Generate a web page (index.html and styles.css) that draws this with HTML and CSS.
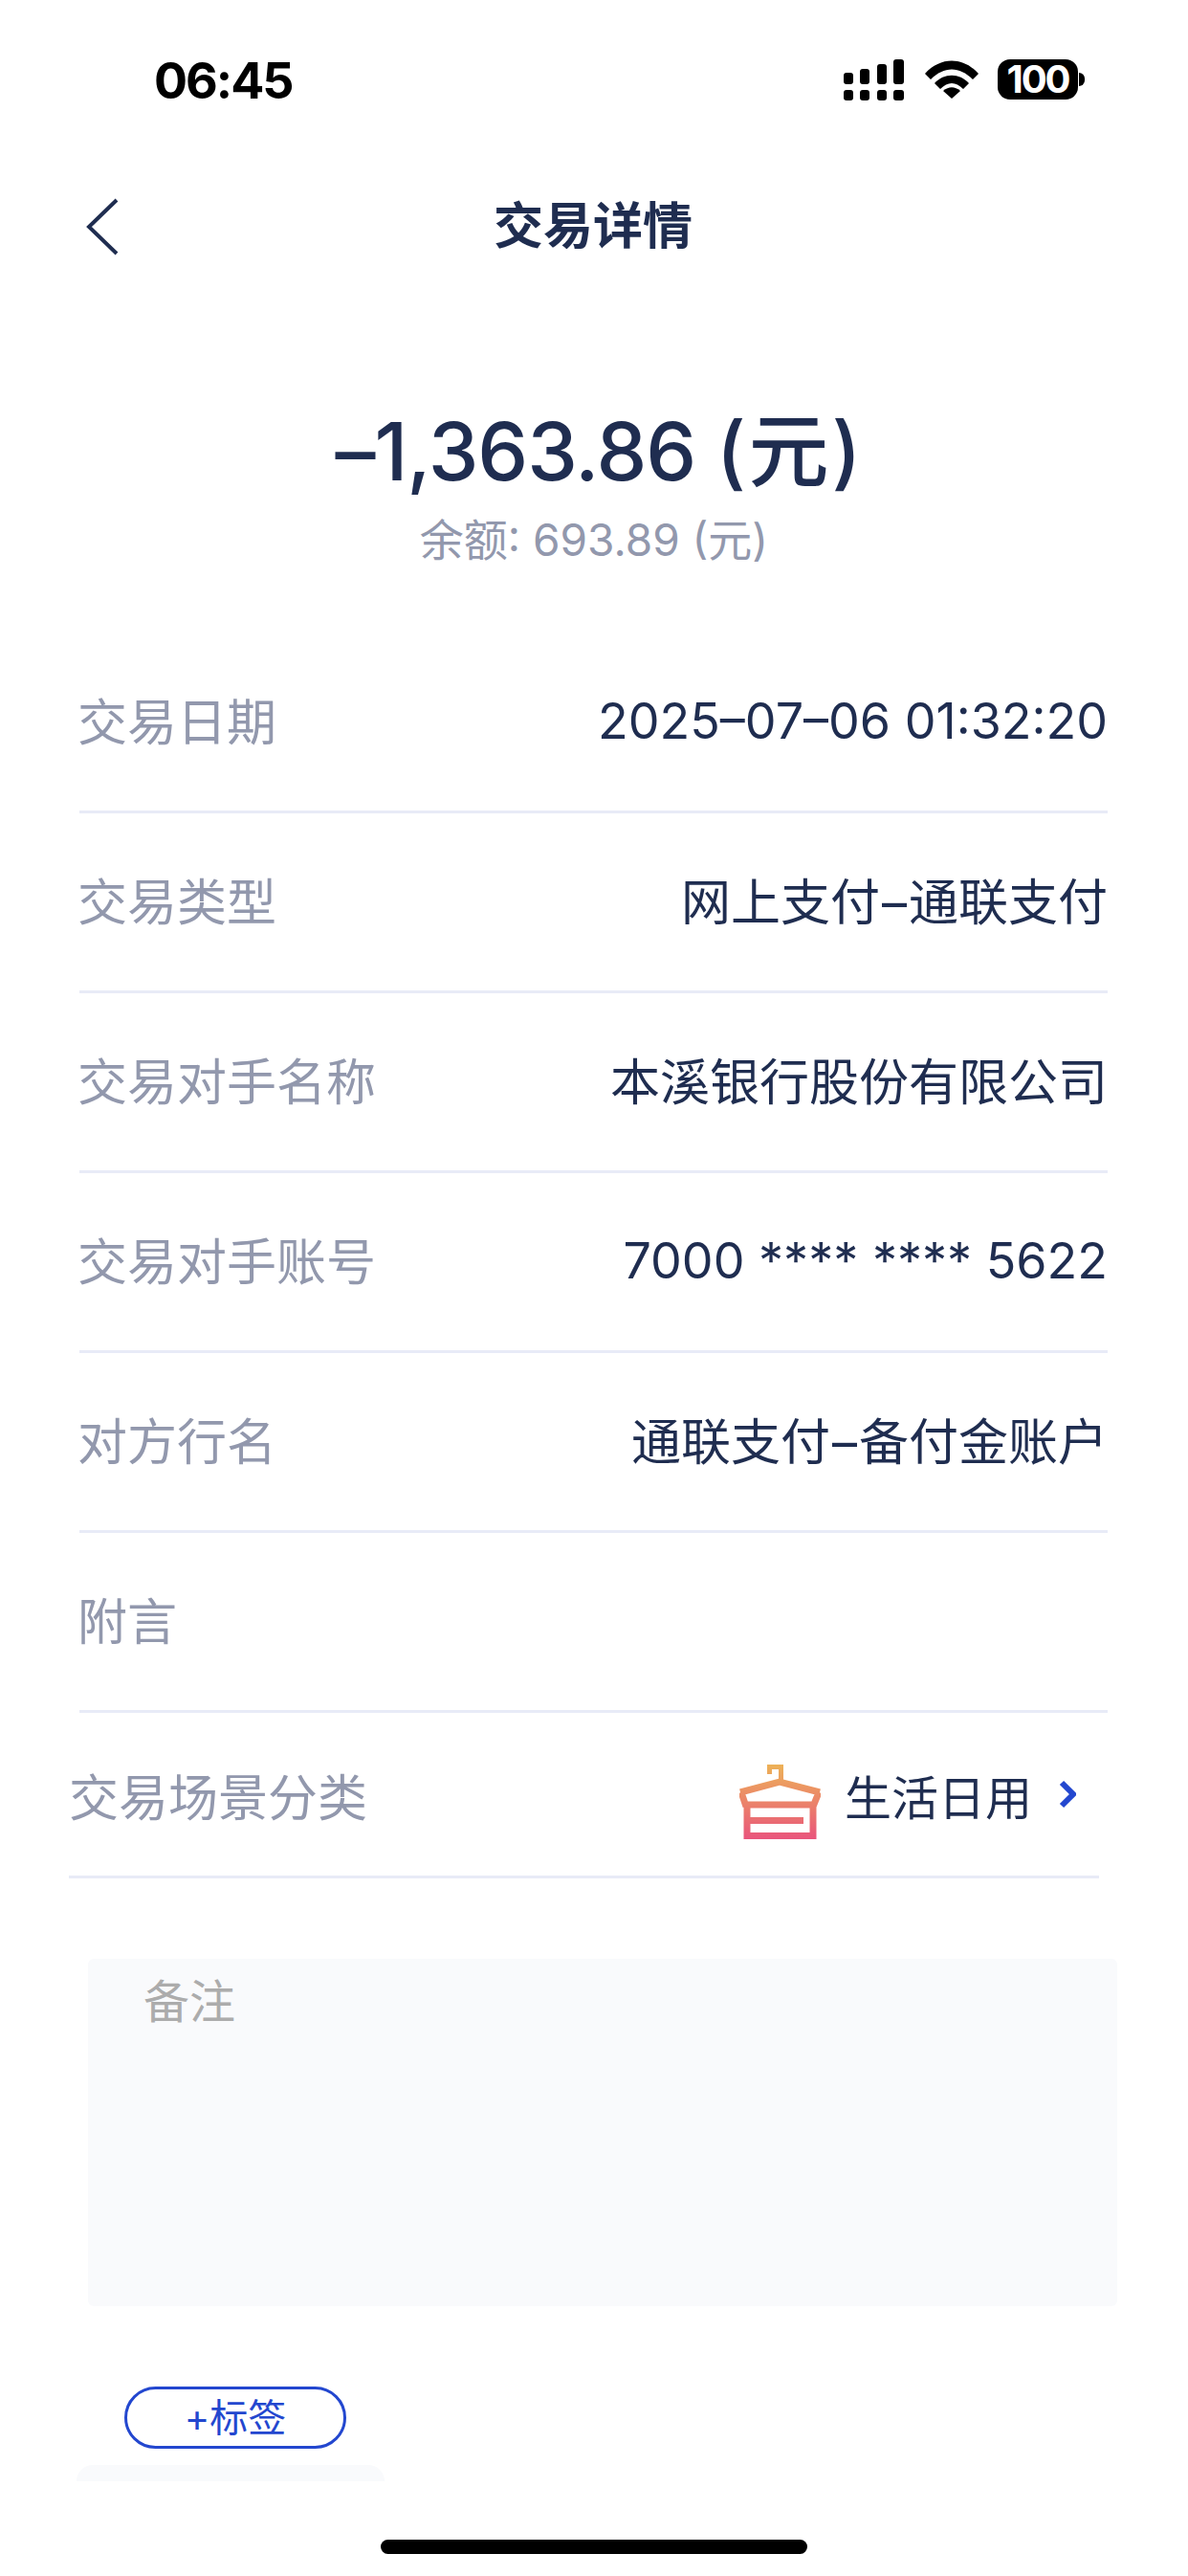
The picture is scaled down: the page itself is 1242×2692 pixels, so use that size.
FILE: index.html
```html
<!DOCTYPE html>
<html lang="zh-CN">
  <head>
    <meta charset="UTF-8" />
    <meta name="viewport" content="width=device-width, initial-scale=1.0" />
    <title>交易详情</title>
    <link rel="stylesheet" href="styles.css">
  </head>
  <body>
    <div class="page">
      <!-- Status bar -->
      <div class="status-bar">
        <span class="time">06:45</span>
        <div class="status-icons">
          <svg class="signal" width="63" height="43" viewBox="0 0 63 43">
            <rect x="0" y="14" width="10" height="12" rx="3" />
            <rect x="17" y="10" width="10" height="16" rx="3" />
            <rect x="35" y="5" width="10" height="21" rx="3" />
            <rect x="52" y="0" width="11" height="26" rx="3" />
            <rect x="0" y="32" width="10" height="11" rx="3" />
            <rect x="17" y="32" width="10" height="11" rx="3" />
            <rect x="35" y="32" width="10" height="11" rx="3" />
            <rect x="52" y="32" width="11" height="11" rx="3" />
          </svg>
          <svg class="wifi" width="56" height="40" viewBox="0 0 56 40">
            <path d="M0 14 C16 -4 40 -4 56 14 L50 20 C36 6 20 6 6 20 Z" />
            <path d="M10 24 C20 13 36 13 46 24 L40 30 C32 22 24 22 16 30 Z" />
            <path d="M19 32 C25 27 31 27 37 32 L28 40 Z" />
          </svg>
          <div class="battery">
            <span class="battery-body">100</span>
            <span class="battery-cap"></span>
          </div>
        </div>
      </div>

      <!-- Nav -->
      <div class="nav">
        <svg class="back" width="34" height="60" viewBox="0 0 34 60">
          <path d="M32 2 L3 30 L32 58" />
        </svg>
        <h1>交易详情</h1>
      </div>

      <div class="amount">
        <div class="amount-main">–1,363.86 <span class="amount-unit">(元)</span></div>
        <div class="amount-balance">余额: 693.89 (元)</div>
      </div>

      <div class="rows">
        <div class="row"><span class="label">交易日期</span><span class="value value-num">2025–07–06 01:32:20</span></div>
        <div class="row"><span class="label">交易类型</span><span class="value">网上支付<span class="dash">–</span>通联支付</span></div>
        <div class="row"><span class="label">交易对手名称</span><span class="value">本溪银行股份有限公司</span></div>
        <div class="row"><span class="label">交易对手账号</span><span class="value value-num">7000 **** **** 5622</span></div>
        <div class="row"><span class="label">对方行名</span><span class="value">通联支付<span class="dash">–</span>备付金账户</span></div>
        <div class="row"><span class="label">附言</span></div>
      </div>

      <div class="scene-row">
        <span class="label">交易场景分类</span>
        <div class="scene-value">
          <svg class="scene-icon" width="85" height="78" viewBox="0 0 85 78">
            <defs>
              <linearGradient id="hanger" gradientUnits="userSpaceOnUse" x1="0" y1="0" x2="0" y2="78">
                <stop offset="0" stop-color="#edb257" />
                <stop offset="1" stop-color="#e9557c" />
              </linearGradient>
            </defs>
            <path class="hook" d="M31.500 10 V2.500 H43.500 V19" />
            <path d="M1 29 L42 18 L84 29 M2 29 L7 44 M83 29 L77 44 M7 42 H77 M8 42 V74.500 H77 V42 M8 58.500 H67" />
          </svg>
          <span class="scene-name">生活日用</span>
          <svg class="scene-arrow" width="18" height="30" viewBox="0 0 18 30">
            <path d="M3 3 L15 15 L3 27" />
          </svg>
        </div>
      </div>

      <div class="note">备注</div>

      <div class="tag-btn">+标签</div>
      <div class="tag-shadow"></div>

      <div class="home-bar"></div>
    </div>
  </body>
</html>
```

FILE: styles.css
```css
body {
  margin: 0;
  background-color: #fff;
  font-family: Inter, "Noto Sans CJK SC", sans-serif;
  color: #1f2d50;
}

.page {
  width: 1242px;
  height: 2692px;
  overflow: hidden;
  display: flex;
  flex-direction: column;
}

/* Status bar */
.status-bar {
  height: 62px;
  padding: 62px 108px 0 161px;
  display: flex;
  justify-content: space-between;
  color: #000;
}

.time {
  font-size: 52px;
  font-weight: 700;
  letter-spacing: -2px;
  line-height: 45px;
}

.status-icons {
  display: flex;
  align-items: flex-start;
}

.signal {
  fill: #000;
  margin-right: 22px;
}

.wifi {
  fill: #000;
  margin-top: 1px;
  margin-right: 20px;
}

.battery {
  display: flex;
  align-items: center;
}

.battery-body {
  width: 84px;
  height: 42px;
  background-color: #000;
  color: #fff;
  border-radius: 13px;
  font-size: 40px;
  font-weight: 700;
  letter-spacing: -2px;
  line-height: 42px;
  text-align: center;
}

.battery-cap {
  width: 6px;
  height: 14px;
  margin-left: 1px;
  background-color: #000;
  border-radius: 0 7px 7px 0;
}

/* Nav */
.nav {
  height: 60px;
  margin-top: 83px;
  padding-left: 90px;
  display: flex;
  align-items: center;
}

.back {
  fill: none;
  stroke: #1f2d50;
  stroke-width: 4;
}

.nav h1 {
  margin: 0 0 0 392px;
  font-size: 52px;
  font-weight: 700;
  line-height: 60px;
}

/* Amount */
.amount {
  margin-top: 155px;
  text-align: center;
}

.amount-main {
  padding-left: 12px;
  font-size: 84px;
  font-weight: 500;
  letter-spacing: -1px;
  line-height: 100px;
}

.amount-unit {
  letter-spacing: 3px;
}

.amount-balance {
  margin-top: 16px;
  font-size: 46px;
  line-height: 52px;
  color: #9298ad;
}

/* Detail rows */
.rows {
  margin: 72px 84px 0 83px;
}

.row {
  height: 179px;
  padding-bottom: 6px;
  display: flex;
  justify-content: space-between;
  align-items: center;
  border-bottom: 3px solid #e8ebf7;
}

.row .label {
  margin-left: -2px;
}

.label {
  font-size: 52px;
  color: #9298ad;
}

.value {
  font-size: 52px;
}

.value-num {
  margin-top: 4px;
}

.dash {
  margin: 0 2px;
}

.scene-row {
  height: 170px;
  margin: 0 93px 0 72px;
  display: flex;
  justify-content: space-between;
  align-items: center;
  border-bottom: 3px solid #e8ebf7;
}

.scene-value {
  display: flex;
  align-items: center;
}

.scene-icon {
  fill: none;
  stroke: url(#hanger);
  stroke-width: 7;
  margin-top: 16px;
  margin-right: 25px;
}

.scene-icon .hook {
  stroke-width: 5;
}

.scene-name {
  font-size: 49px;
}

.scene-arrow {
  fill: none;
  stroke: #2347cf;
  stroke-width: 6;
  margin-left: 28px;
  margin-right: 24px;
}

/* Note box */
.note {
  height: 348px;
  margin: 84px 74px 0 92px;
  padding: 15px 0 0 58px;
  background-color: #f9fafc;
  border-radius: 6px;
  font-size: 48px;
  line-height: 60px;
  color: #acacac;
}

.tag-btn {
  width: 226px;
  height: 59px;
  margin: 84px 0 0 130px;
  border: 3px solid #2347cf;
  border-radius: 34px;
  color: #2347cf;
  font-size: 40px;
  line-height: 60px;
  text-align: center;
}

.tag-shadow {
  width: 322px;
  height: 17px;
  margin: 17px 0 0 80px;
  background-color: #f9fafc;
  border-radius: 30px 30px 0 0;
}

.home-bar {
  width: 446px;
  height: 15px;
  margin: 61px 0 0 398px;
  background-color: #000;
  border-radius: 8px;
}
```
